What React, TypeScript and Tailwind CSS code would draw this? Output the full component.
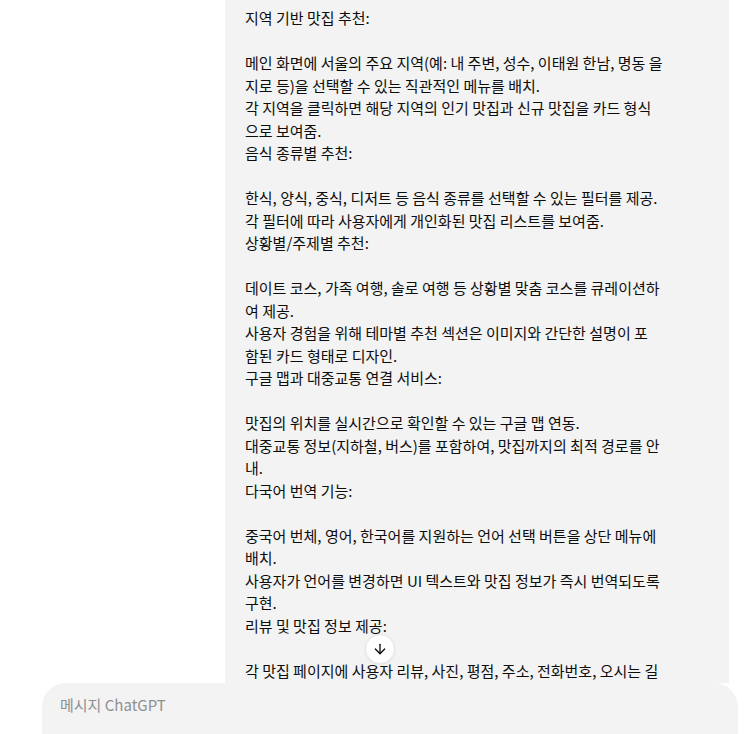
import { ArrowDown } from "lucide-react";

const LINES = [
  "지역 기반 맛집 추천:",
  "",
  "메인 화면에 서울의 주요 지역(예: 내 주변, 성수, 이태원 한남, 명동 을",
  "지로 등)을 선택할 수 있는 직관적인 메뉴를 배치.",
  "각 지역을 클릭하면 해당 지역의 인기 맛집과 신규 맛집을 카드 형식",
  "으로 보여줌.",
  "음식 종류별 추천:",
  "",
  "한식, 양식, 중식, 디저트 등 음식 종류를 선택할 수 있는 필터를 제공.",
  "각 필터에 따라 사용자에게 개인화된 맛집 리스트를 보여줌.",
  "상황별/주제별 추천:",
  "",
  "데이트 코스, 가족 여행, 솔로 여행 등 상황별 맞춤 코스를 큐레이션하",
  "여 제공.",
  "사용자 경험을 위해 테마별 추천 섹션은 이미지와 간단한 설명이 포",
  "함된 카드 형태로 디자인.",
  "구글 맵과 대중교통 연결 서비스:",
  "",
  "맛집의 위치를 실시간으로 확인할 수 있는 구글 맵 연동.",
  "대중교통 정보(지하철, 버스)를 포함하여, 맛집까지의 최적 경로를 안",
  "내.",
  "다국어 번역 기능:",
  "",
  "중국어 번체, 영어, 한국어를 지원하는 언어 선택 버튼을 상단 메뉴에",
  "배치.",
  "사용자가 언어를 변경하면 UI 텍스트와 맛집 정보가 즉시 번역되도록",
  "구현.",
  "리뷰 및 맛집 정보 제공:",
  "",
  "각 맛집 페이지에 사용자 리뷰, 사진, 평점, 주소, 전화번호, 오시는 길",
];

export default function App() {
  return (
    <div className="relative flex h-[734px] w-[755px] flex-col overflow-hidden bg-white font-['Noto_Sans_CJK_KR','Noto_Sans',sans-serif] text-[#0d0d0d]">
      {/* Conversation */}
      <div className="flex min-h-0 flex-1 justify-end overflow-hidden pr-[26px]">
        <div className="w-[504px] bg-[#f3f3f3] px-5 pt-[7px]">
          {LINES.map((line, i) => (
            <div key={i} className="h-[22.5px] whitespace-nowrap text-[15px] leading-[22.5px]">
              {line}
            </div>
          ))}
        </div>
      </div>

      {/* Scroll to bottom */}
      <button className="absolute left-[365px] top-[634px] flex h-[30px] w-[30px] items-center justify-center rounded-full border border-[#e5e5e5] bg-white text-[#0d0d0d] shadow-[0_1px_3px_rgba(0,0,0,0.06)]">
        <ArrowDown size={16} strokeWidth={2} />
      </button>

      {/* Composer */}
      <div className="flex h-[51px] shrink-0 pl-[42px] pr-[17px]">
        <div className="flex-1 rounded-t-[24px] bg-[#f3f3f3] px-[18px] pt-[9px]">
          <span className="text-[15px] leading-[22px] text-[#8f8f8f]">메시지 ChatGPT</span>
        </div>
      </div>
    </div>
  );
}
